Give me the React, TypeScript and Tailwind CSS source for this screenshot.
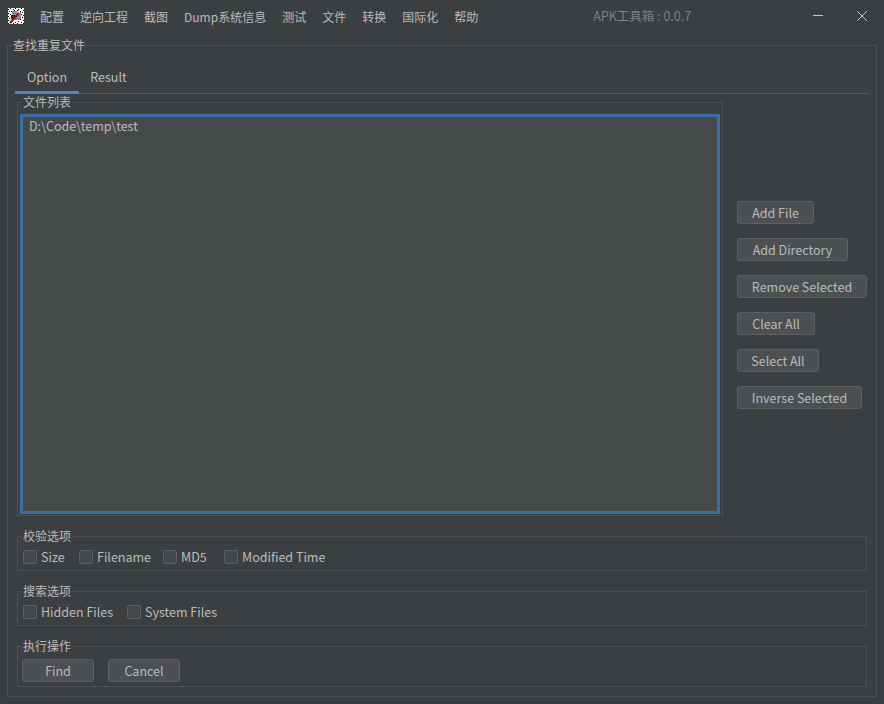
const menus = ["配置", "逆向工程", "截图", "Dump系统信息", "测试", "文件", "转换", "国际化", "帮助"];

const sideButtons = [
  { label: "Add File", width: "w-[77px]" },
  { label: "Add Directory", width: "w-[111px]" },
  { label: "Remove Selected", width: "w-[130px]" },
  { label: "Clear All", width: "w-[78px]" },
  { label: "Select All", width: "w-[82px]" },
  { label: "Inverse Selected", width: "w-[125px]" },
];

// 16x16 app icon: white/black noise with a red diagonal
const iconDark = [
  [0, 1], [2, 0], [5, 1], [7, 0], [10, 1], [13, 0], [15, 2], [1, 3], [3, 3], [12, 3], [14, 4],
  [0, 5], [2, 6], [13, 6], [15, 7], [0, 8], [1, 10], [14, 9], [12, 11], [0, 12], [15, 12],
  [2, 13], [7, 14], [10, 13], [13, 14], [5, 15], [0, 15], [9, 15], [15, 15], [6, 2], [9, 2],
];

function AppIcon() {
  return (
    <svg width="16" height="16" viewBox="0 0 16 16" shapeRendering="crispEdges" className="shrink-0">
      <rect width="16" height="16" fill="#f4f4f4" />
      <rect x="4" y="3" width="9" height="9" fill="#8c8c8c" />
      <rect x="3" y="7" width="4" height="4" fill="#2a2a2a" />
      <rect x="9" y="2" width="3" height="4" fill="#d8d8d8" />
      {iconDark.map(([x, y]) => (
        <rect key={`${x}-${y}`} x={x} y={y} width="1" height="1" fill="#111" />
      ))}
      <path d="M2 15 L11 5" stroke="#8e1a1f" strokeWidth="2.4" shapeRendering="auto" />
    </svg>
  );
}

function Btn({ label, className }: { label: string; className: string }) {
  return (
    <button className={`h-[23px] rounded-[3px] border border-[#5e6060] bg-[#4c5052] text-[12.5px] leading-[21px] text-[#bbbbbb] ${className}`}>
      {label}
    </button>
  );
}

function Check({ label, className }: { label: string; className: string }) {
  return (
    <label className={`flex items-center text-[12.5px] text-[#bbbbbb] ${className}`}>
      <span className="mr-[4px] h-[14px] w-[14px] rounded-[2px] border border-[#5e6060] bg-[#43494a]" />
      {label}
    </label>
  );
}

function Group({ title, className, children }: { title: string; className: string; children: React.ReactNode }) {
  return (
    <fieldset className={`min-w-0 border border-[#4e5052] ${className}`}>
      <legend className="ml-[4px] px-px text-[12px] leading-[16px] text-[#bbbbbb]">{title}</legend>
      {children}
    </fieldset>
  );
}

export default function App() {
  return (
    <div className="h-[704px] w-[884px] overflow-hidden bg-[#3c3f41] font-['Noto_Sans_CJK_SC','Noto_Sans',sans-serif] text-[#bbbbbb]">
      <div className="flex h-[37px] items-start pl-[8px] pt-[8px]">
        <AppIcon />
        <div className="ml-[16px] flex h-[17px] items-center gap-[16px] text-[12px]">
          {menus.map((m) => (
            <span key={m}>{m}</span>
          ))}
        </div>
        <span className="ml-[115px] flex h-[17px] items-center text-[12.5px] text-[#808080]">APK工具箱 : 0.0.7</span>
        <svg width="12" height="12" viewBox="0 0 12 12" className="ml-[121px] mt-[2px]" stroke="#c4c4c4" strokeWidth="1">
          <path d="M1 5.5 H11" />
        </svg>
        <svg width="12" height="12" viewBox="0 0 12 12" className="ml-[32px] mt-[2px]" stroke="#c4c4c4" strokeWidth="1">
          <path d="M1 1 L11 11 M11 1 L1 11" />
        </svg>
      </div>

      <Group title="查找重复文件" className="mx-[7px] h-[660px]">
        <div className="ml-[7px] mr-[6px] flex h-[41px] border-b border-[#55585a] text-[12.5px]">
          <div className="-mb-px flex w-[64px] items-center justify-center border-b-[3px] border-[#4a88c7] pt-[10px]">Option</div>
          <div className="flex w-[59px] items-center justify-center pt-[9px]">Result</div>
        </div>

        <div className="flex">
          <Group title="文件列表" className="ml-[9px] h-[422px] w-[706px] shrink-0">
            <div className="mx-[2px] mt-[4px] h-[400px] border-[3px] border-[#3a6ea5] bg-[#45494a] px-[6px] py-[1px] text-[12.5px] leading-[16px]">
              D:\Code\temp\test
            </div>
          </Group>
          <div className="ml-[14px] flex flex-col items-start justify-center gap-[14px] pb-[1px]">
            {sideButtons.map((b) => (
              <Btn key={b.label} label={b.label} className={b.width} />
            ))}
          </div>
        </div>

        <Group title="校验选项" className="ml-[9px] mt-[12px] h-[43px] w-[850px]">
          <div className="flex h-[26px] items-center pl-[5px]">
            <Check label="Size" className="w-[56px]" />
            <Check label="Filename" className="w-[84px]" />
            <Check label="MD5" className="w-[61px]" />
            <Check label="Modified Time" className="w-[120px]" />
          </div>
        </Group>

        <Group title="搜索选项" className="ml-[9px] mt-[12px] h-[43px] w-[850px]">
          <div className="flex h-[26px] items-center pl-[5px]">
            <Check label="Hidden Files" className="w-[104px]" />
            <Check label="System Files" className="w-[110px]" />
          </div>
        </Group>

        <Group title="执行操作" className="ml-[9px] mt-[12px] h-[49px] w-[850px]">
          <div className="flex gap-[14px] pl-[4px] pt-[5px]">
            <Btn label="Find" className="w-[72px]" />
            <Btn label="Cancel" className="w-[72px]" />
          </div>
        </Group>
      </Group>
    </div>
  );
}
